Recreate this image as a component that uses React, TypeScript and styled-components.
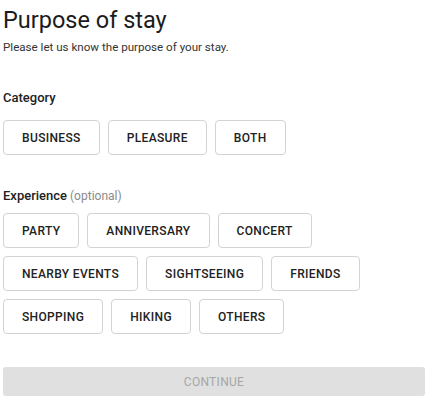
import React from "react";
import styled, { createGlobalStyle } from "styled-components";

const Global = createGlobalStyle`
  html, body { margin: 0; padding: 0; background: #ffffff; }
  body { font-family: Roboto, "Noto Sans", Arial, sans-serif; color: #212121; }
`;

const Page = styled.div`
  display: flex;
  flex-direction: column;
  padding: 6px 4px 0 3px;
`;

const Title = styled.h1`
  margin: 0;
  font-size: 23.5px;
  line-height: 28px;
  font-weight: 400;
  color: #1b1b1b;
`;

const Subtitle = styled.p`
  margin: 5px 0 0;
  font-size: 11.6px;
  line-height: 16px;
  color: #333333;
`;

const Section = styled.section<{ $top: number }>`
  display: flex;
  flex-direction: column;
  margin-top: ${(p) => p.$top}px;
`;

const Label = styled.div<{ $gap: number }>`
  font-size: 13px;
  line-height: 18px;
  font-weight: 500;
  color: #222222;
  margin-bottom: ${(p) => p.$gap}px;
`;

const Optional = styled.span`
  font-weight: 400;
  font-size: 12px;
  color: #8a8a8a;
  margin-left: 3px;
`;

const Chips = styled.div`
  display: flex;
  flex-wrap: wrap;
  gap: 8px;
`;

const Chip = styled.button`
  height: 35px;
  padding: 0 18px;
  box-sizing: border-box;
  border: 1px solid #d3d3d3;
  border-radius: 4px;
  background: #ffffff;
  font-family: Roboto, Arial, sans-serif;
  font-size: 12px;
  font-weight: 500;
  letter-spacing: 0.35px;
  color: #222222;
  text-transform: uppercase;
  cursor: pointer;
`;

const Continue = styled.button`
  margin-top: 33px;
  width: 100%;
  height: 29px;
  border: none;
  border-radius: 3px;
  background: #e0e0e0;
  font-family: Roboto, Arial, sans-serif;
  font-size: 12px;
  font-weight: 400;
  letter-spacing: 0.3px;
  color: #a6a6a6;
  text-transform: uppercase;
`;

const categories = ["Business", "Pleasure", "Both"];
const experiences = [
  "Party",
  "Anniversary",
  "Concert",
  "Nearby events",
  "Sightseeing",
  "Friends",
  "Shopping",
  "Hiking",
  "Others",
];

export default function App() {
  return (
    <>
      <Global />
      <Page>
        <Title>Purpose of stay</Title>
        <Subtitle>Please let us know the purpose of your stay.</Subtitle>
        <Section $top={34}>
          <Label $gap={13}>Category</Label>
          <Chips>
            {categories.map((c) => (
              <Chip key={c}>{c}</Chip>
            ))}
          </Chips>
        </Section>
        <Section $top={32}>
          <Label $gap={8}>
            Experience<Optional>(optional)</Optional>
          </Label>
          <Chips>
            {experiences.map((c) => (
              <Chip key={c}>{c}</Chip>
            ))}
          </Chips>
        </Section>
        <Continue disabled>Continue</Continue>
      </Page>
    </>
  );
}
